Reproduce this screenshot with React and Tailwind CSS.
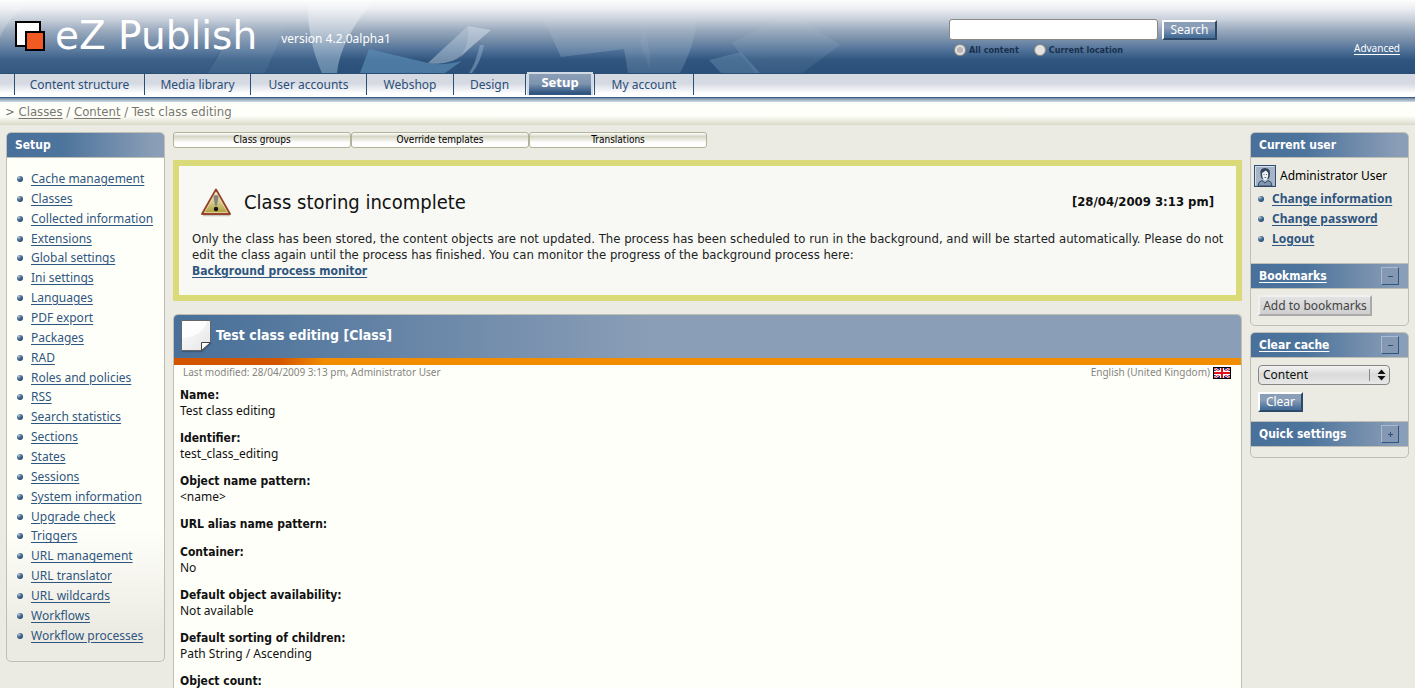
const TABS = [
  ["Content structure", "w-[130px]"],
  ["Media library", "w-[106px]"],
  ["User accounts", "w-[116px]"],
  ["Webshop", "w-[87px]"],
  ["Design", "w-[72px]"],
  ["Setup", "w-[69px]"],
  ["My account", "w-[100px]"],
];

const SETUP_LINKS = [
  "Cache management", "Classes", "Collected information", "Extensions", "Global settings",
  "Ini settings", "Languages", "PDF export", "Packages", "RAD", "Roles and policies", "RSS",
  "Search statistics", "Sections", "States", "Sessions", "System information", "Upgrade check",
  "Triggers", "URL management", "URL translator", "URL wildcards", "Workflows", "Workflow processes",
];

const FIELDS = [
  ["Name:", "Test class editing"],
  ["Identifier:", "test_class_editing"],
  ["Object name pattern:", "<name>"],
  ["URL alias name pattern:", ""],
  ["Container:", "No"],
  ["Default object availability:", "Not available"],
  ["Default sorting of children:", "Path String / Ascending"],
  ["Object count:", ""],
];

const TITLE_BAR = "bg-[linear-gradient(90deg,#49709a_0%,#4d749c_35%,#8b9eb7_95%,#8b9eb7_100%)]";

function Bullet() {
  return (
    <svg className="shrink-0" width="6" height="6" viewBox="0 0 6 6" aria-hidden="true">
      <defs>
        <radialGradient id="ball" cx="0.3" cy="0.25" r="0.8">
          <stop offset="0" stopColor="#b9cbdc" />
          <stop offset="0.45" stopColor="#52759b" />
          <stop offset="1" stopColor="#24466c" />
        </radialGradient>
      </defs>
      <circle cx="3" cy="3" r="3" fill="url(#ball)" />
    </svg>
  );
}

function HeaderArt() {
  return (
    <svg className="absolute left-0 top-0 h-[73px] w-[900px]" viewBox="0 0 900 73" preserveAspectRatio="none" aria-hidden="true">
      <defs>
        <linearGradient id="fade" x1="0" y1="0" x2="0" y2="73" gradientUnits="userSpaceOnUse">
          <stop offset="0" stopColor="#fff" stopOpacity="0.2" />
          <stop offset="0.4" stopColor="#f4f8fb" stopOpacity="0.42" />
          <stop offset="1" stopColor="#8fb2ce" stopOpacity="0.55" />
        </linearGradient>
        <linearGradient id="soft" x1="0" y1="0" x2="0" y2="73" gradientUnits="userSpaceOnUse">
          <stop offset="0" stopColor="#fff" stopOpacity="0" />
          <stop offset="0.25" stopColor="#dde5ee" stopOpacity="0.05" />
          <stop offset="0.7" stopColor="#b9cada" stopOpacity="0.26" />
          <stop offset="1" stopColor="#7fa0c0" stopOpacity="0.28" />
        </linearGradient>
      </defs>
      <path d="M0 0H33Q8 16 0 38Z" fill="url(#fade)" opacity="0.6" />
      <path d="M33 0Q8 16 0 38V73H208L245 0Z" fill="url(#soft)" opacity="0.4" />
      <path d="M250 0H297L265 73H208Z" fill="url(#soft)" opacity="0.8" />
      <path d="M297 0H310Q307 42 323 73H265Z" fill="url(#soft)" opacity="0.4" />
      <path d="M308 0H374Q340 40 337 73H322Q307 40 308 0Z" fill="url(#fade)" />
      <path d="M369 49L428 63Q443 66 462 61L445 73H360Z" fill="#5f92b9" opacity="0.62" />
      <path d="M428 63L468 26L491 30L462 55Q450 66 428 63Z" fill="#c5d5e2" opacity="0.45" />
      <path d="M468 26Q470 45 458 60L473 45L491 30Z" fill="#e5edf3" opacity="0.2" />
      <path d="M480 45Q475 65 469 73H472Q481 62 484 45Z" fill="#a8c3da" opacity="0.4" />
      <path d="M537 5L561 57L624 49L628 73H680Q700 35 696 5Z" fill="url(#soft)" />
      <path d="M644 28Q652 52 650 70L640 43Z" fill="#c9d6e2" opacity="0.08" />
      <path d="M790 12L840 45L802 73H755L732 43Z" fill="url(#soft)" opacity="0.5" />
      <path d="M709 60L741 52L760 73H721Z" fill="#7195b7" opacity="0.4" />
    </svg>
  );
}

function LogoMark() {
  return (
    <svg width="30" height="30" viewBox="0 0 30 30" aria-hidden="true">
      <rect x="1" y="1" width="24" height="24" fill="#fff" stroke="#000" strokeWidth="2" />
      <rect x="11" y="11" width="18" height="18" fill="#f15a22" stroke="#000" strokeWidth="2" />
    </svg>
  );
}

function Header() {
  return (
    <header className="relative flex h-[73px] items-start bg-[linear-gradient(180deg,#fdfdfd_0%,#eceef2_12%,#ccd3dd_25%,#9aaabe_41%,#7990aa_54%,#52739a_68%,#30567f_82%,#2a4f79_100%)]">
      <HeaderArt />
      <div className="relative flex flex-1 items-center pl-[15px] pt-[21px]">
        <LogoMark />
        <span className="ml-[10px] whitespace-nowrap font-['DejaVu_Sans'] text-[39px] leading-[30px] text-white">eZ Publish</span>
        <span className="ml-6 pt-1.5 text-[12px] leading-4 text-white">version 4.2.0alpha1</span>
      </div>
      <form className="relative w-[405px] pt-[19px]" onSubmit={(e) => e.preventDefault()}>
        <div className="flex items-center gap-1">
          <input type="text" aria-label="Search text" className="h-[21px] w-[209px] rounded-[3px] border border-[#8b8884] bg-white px-1" />
          <button type="submit" className="h-5 w-[55px] border-2 border-b-[#2c4a68] border-l-white border-r-[#2c4a68] border-t-white bg-[linear-gradient(180deg,#8b9eb7_0%,#8b9eb7_35%,#49709a_90%)] text-[12px] leading-4 text-white">Search</button>
        </div>
        <div className="flex items-center gap-[15px] pl-[5px] pt-1 font-['DejaVu_Sans_Condensed'] text-[9px] font-bold leading-3 text-[#17304d]">
          <label className="flex items-center gap-[3px]">
            <input type="radio" name="scope" defaultChecked className="size-3 appearance-none rounded-full border border-[#8d8782] bg-[#e4e2e0] checked:bg-[radial-gradient(circle,#b9b7b5_40%,#e4e2e0_50%)]" />
            All content
          </label>
          <label className="flex items-center gap-[3px]">
            <input type="radio" name="scope" className="size-3 appearance-none rounded-full border border-[#8d8782] bg-[#e4e2e0]" />
            Current location
          </label>
        </div>
      </form>
      <a href="#advanced" className="relative mt-[41px] w-[61px] text-[10px] leading-[14px] text-white underline underline-offset-2">Advanced</a>
    </header>
  );
}

function Tabs() {
  return (
    <nav className="flex h-[25px] border-b border-t border-b-[#3a5d84] border-t-[#2a5078] bg-[linear-gradient(180deg,#d5d9e2_0%,#d5d9e2_40%,#fff_85%)] pl-[14px] text-[12px] leading-[21px] text-[#2a4f79]">
      {TABS.map(([name, width]) =>
        name === "Setup" ? (
          <div key={name} className={`${width} h-[21px] border-l border-[#2a5078]`}>
            <a href="#setup" className="relative -top-0.5 mx-px block h-[23px] border-x-2 border-t-2 border-[#d0d9e4] bg-[linear-gradient(180deg,#8b9eb7_0%,#7f95b0_45%,#2f5680_90%)] text-center text-[13px] font-bold leading-[17px] text-white">{name}</a>
          </div>
        ) : (
          <a key={name} href="#tab" className={`${width} h-[21px] border-l border-[#2a5078] text-center last:border-r`}>{name}</a>
        )
      )}
    </nav>
  );
}

function PanelTitle({ children, toggle, link, className = "h-[25px]" }) {
  return (
    <h2 className={`${TITLE_BAR} ${className} flex items-center justify-between border-b border-[#bfbfb5] pl-2 pr-[9px] font-['DejaVu_Sans_Condensed'] text-[12px] font-bold leading-4 text-white`}>
      {link ? <a href="#panel" className="underline underline-offset-2">{children}</a> : <span>{children}</span>}
      {toggle && (
        <button type="button" className="flex size-[18px] items-center justify-center border border-b-[#2f5680] border-l-[#a9bbd0] border-r-[#2f5680] border-t-[#a9bbd0] bg-[#8498b3]" aria-label={toggle === "+" ? "Expand" : "Collapse"}>
          <svg width="5" height="5" viewBox="0 0 5 5" aria-hidden="true">
            <path d={toggle === "+" ? "M0 2.5H5M2.5 0V5" : "M0 2.5H5"} stroke="#2a4f79" strokeWidth="1" />
          </svg>
        </button>
      )}
    </h2>
  );
}

function Warning() {
  return (
    <svg width="32" height="30" viewBox="0 0 32 30" aria-hidden="true">
      <defs>
        <linearGradient id="warn" x1="0" y1="0" x2="0" y2="1">
          <stop offset="0" stopColor="#f3efd0" />
          <stop offset="0.55" stopColor="#d3c887" />
          <stop offset="1" stopColor="#a99a35" />
        </linearGradient>
      </defs>
      <path d="M3 28.3H30" stroke="#000" strokeOpacity="0.2" strokeWidth="2" />
      <path d="M16 2.500L30 27H2Z" fill="url(#warn)" stroke="#97452c" strokeWidth="2" strokeLinejoin="round" />
      <path d="M16 5L27.500 25.500H4.500Z" fill="none" stroke="#f4eecb" strokeOpacity="0.6" strokeWidth="1" />
      <path d="M13.500 10Q13.500 8 16 8T18.500 10L17 18.500H15Z" fill="#85857c" />
      <circle cx="16" cy="22" r="2.200" fill="#111" />
    </svg>
  );
}

function Page() {
  return (
    <svg width="32" height="34" viewBox="0 0 32 34" aria-hidden="true">
      <defs>
        <linearGradient id="sheet" x1="0" y1="0" x2="1" y2="1">
          <stop offset="0" stopColor="#fff" />
          <stop offset="1" stopColor="#e4e4e4" />
        </linearGradient>
      </defs>
      <path d="M2 32.500H22L31 24" fill="none" stroke="#1f3654" strokeOpacity="0.4" strokeWidth="1.500" />
      <path d="M1.500 1.500H30.500V23.500L22 31.500H1.500Z" fill="url(#sheet)" stroke="#666" />
      <path d="M2 2H27Q24 17 2 19Z" fill="#fff" opacity="0.8" />
      <path d="M21.500 31.500V23.500H30.500Z" fill="#fff" stroke="#444" />
    </svg>
  );
}

function Flag() {
  return (
    <svg width="18" height="12" viewBox="0 0 18 12" role="img" aria-label="United Kingdom">
      <rect width="18" height="12" fill="#1a2a80" />
      <path d="M1 1L17 11M17 1L1 11" stroke="#fff" strokeWidth="2.200" />
      <path d="M1 1L17 11M17 1L1 11" stroke="#e0101c" strokeWidth="1" />
      <path d="M9 0V12M0 6H18" stroke="#fff" strokeWidth="4" />
      <path d="M9 0V12M0 6H18" stroke="#e0101c" strokeWidth="2" />
      <rect x="0.500" y="0.500" width="17" height="11" fill="none" stroke="#000" />
    </svg>
  );
}

function Portrait() {
  return (
    <svg width="22" height="22" viewBox="0 0 22 22" aria-hidden="true">
      <rect x="0.500" y="0.500" width="21" height="21" fill="#a5b4c7" stroke="#2f4d70" />
      <path d="M1.500 20.500V1.500H20.500" fill="none" stroke="#d4dde8" />
      <path d="M4 21Q4 16.500 8 15.500L11 18L14 15.500Q18 16.500 18 21Z" fill="#8397b0" stroke="#2c3f58" strokeWidth="0.900" />
      <path d="M6.500 9Q5.500 3 11 3T16 9Q16 12 14.500 14H8Q6.500 12 6.500 9Z" fill="#32445c" />
      <path d="M8 8Q10 6.500 12 5.500L14.200 8Q14.500 14.500 11.200 15.500Q8 14.500 8 8Z" fill="#eef1f4" />
      <path d="M9.500 9.500H10.500M12 9.500H13M10.500 12.500H12.200" stroke="#32445c" strokeWidth="0.800" />
    </svg>
  );
}

function LeftMenu() {
  return (
    <aside className="w-[159px] shrink-0 self-start overflow-hidden rounded-[5px] border border-[#bfbfb5] bg-[linear-gradient(180deg,#fffffa_0%,#fffffa_75%,#ecebe3_94%)]">
      <PanelTitle>Setup</PanelTitle>
      <ul className="flex h-[503px] flex-col justify-between pb-[17px] pl-[10px] pt-[13px] text-[12px] leading-4">
        {SETUP_LINKS.map((name) => (
          <li key={name} className="flex items-center gap-2 whitespace-nowrap">
            <Bullet />
            <a href="#item" className="text-[#2f567f] underline underline-offset-2">{name}</a>
          </li>
        ))}
      </ul>
    </aside>
  );
}

function Main() {
  return (
    <main className="flex min-w-0 flex-1 flex-col">
      <div className="flex">
        {["Class groups", "Override templates", "Translations"].map((name) => (
          <button key={name} type="button" className="h-4 w-[178px] rounded-[3px] border border-[#b3b399] bg-[linear-gradient(180deg,#fff_0%,#d7d7c6_25%,#fff_70%)] text-center font-['DejaVu_Sans_Condensed'] text-[10px] leading-[14px] text-black">{name}</button>
        ))}
      </div>
      <section className="mt-3 h-[141px] shrink-0 border-[6px] border-[#dada78] bg-[#f8f9f5] pl-[13px] pr-2 pt-[21px] text-[#111]">
        <div className="flex items-center pl-2 pr-3.5">
          <Warning />
          <h2 className="ml-3 flex-1 font-['DejaVu_Sans_Condensed'] text-[20px] leading-7">Class storing incomplete</h2>
          <span className="font-['DejaVu_Sans_Condensed'] text-[13px] font-bold leading-5">[28/04/2009 3:13 pm]</span>
        </div>
        <p className="mt-3.5 font-['DejaVu_Sans_Condensed'] text-[13px] leading-4 text-[#222]">
          Only the class has been stored, the content objects are not updated. The process has been scheduled to run in the background, and will be started automatically. Please do not edit the class again until the process has finished. You can monitor the progress of the background process here:
        </p>
        <a href="#monitor" className="block w-fit font-['DejaVu_Sans_Condensed'] text-[12px] font-bold leading-4 text-[#2f567f] underline underline-offset-2">Background process monitor</a>
      </section>
      <section className="mt-[13px] shrink-0 overflow-hidden rounded-t-[5px] border border-b-0 border-[#bfbfb5] bg-[#fffffa]">
        <div className="flex h-[43px] items-start gap-1 bg-[linear-gradient(90deg,#49709a_0px,#54789e_100px,#8b9eb7_480px,#8b9eb7_100%)] pl-1.5 pt-1">
          <Page />
          <h1 className="pt-1.5 font-['DejaVu_Sans_Condensed'] text-[14px] font-bold leading-5 text-white">Test class editing [Class]</h1>
        </div>
        <div className="h-[7px] bg-[linear-gradient(90deg,#d45500_0px,#d45500_105px,#f28c00_150px)]" />
        <div className="flex justify-between pl-[9px] pr-[10px] text-[10px] leading-[15px] text-[#85857f]">
          <span>Last modified: 28/04/2009 3:13 pm, Administrator User</span>
          <span className="flex items-center gap-[3px]">English (United Kingdom) <Flag /></span>
        </div>
        <dl className="flex flex-col gap-[13px] pb-4 pl-1.5 pt-2 text-[12px] leading-[15px] text-[#111]">
          {FIELDS.map(([label, value]) => (
            <div key={label}>
              <dt className="font-['DejaVu_Sans_Condensed'] font-bold">{label}</dt>
              {value && <dd>{value}</dd>}
            </div>
          ))}
        </dl>
      </section>
    </main>
  );
}

function RightColumn() {
  return (
    <aside className="flex w-[159px] shrink-0 flex-col gap-[6px] self-start text-[12px] leading-4">
      <div className="overflow-hidden rounded-[5px] border border-[#bfbfb5]">
        <PanelTitle>Current user</PanelTitle>
        <div className="h-[105px] pl-[3px] pt-[7px]">
          <p className="flex items-center gap-1 text-black"><Portrait />Administrator User</p>
          <ul className="pl-1 pt-0.5 text-[12px] font-bold leading-5">
            {["Change information", "Change password", "Logout"].map((name) => (
              <li key={name} className="flex items-center gap-2 whitespace-nowrap">
                <Bullet />
                <a href="#user" className="text-[#2f567f] underline underline-offset-2">{name}</a>
              </li>
            ))}
          </ul>
        </div>
        <PanelTitle link toggle="-" className="h-[26px] border-t">Bookmarks</PanelTitle>
        <div className="px-[7px] pb-[9px] pt-1.5">
          <button type="button" className="block h-[21px] w-[114px] border-2 border-b-[#aaa] border-l-[#f0f0f0] border-r-[#aaa] border-t-[#f0f0f0] bg-[linear-gradient(180deg,#e2e2e2,#cfcfcf)] text-[12px] leading-4 text-[#444]">Add to bookmarks</button>
        </div>
      </div>
      <div className="overflow-hidden rounded-[5px] border border-[#bfbfb5]">
        <PanelTitle link toggle="-">Clear cache</PanelTitle>
        <div className="px-[7px] pb-[9px] pt-[7px]">
          <div className="relative w-[132px]">
            <select aria-label="Cache type" className="block h-5 w-full appearance-none rounded-[4px] border border-[#858585] bg-[linear-gradient(180deg,#f2f2f2,#dadada_50%,#e8e8e8)] pl-1 text-[12px] leading-4 text-[#111]">
              <option>Content</option>
            </select>
            <svg className="pointer-events-none absolute right-1 top-1" width="18" height="12" viewBox="0 0 18 12" aria-hidden="true">
              <path d="M1.500 0V12" stroke="#888" />
              <path d="M9.500 5L13.500 0.500L17.500 5ZM9.500 7L13.500 11.500L17.500 7Z" fill="#111" />
            </svg>
          </div>
          <button type="button" className="mt-[7px] block h-5 w-[45px] border-2 border-b-[#2c4a68] border-l-white border-r-[#2c4a68] border-t-white bg-[linear-gradient(180deg,#8b9eb7_0%,#8b9eb7_35%,#49709a_90%)] text-[12px] leading-4 text-white">Clear</button>
        </div>
        <PanelTitle toggle="+" className="h-[26px] border-t">Quick settings</PanelTitle>
        <div className="h-2.5" />
      </div>
    </aside>
  );
}

export default function App() {
  return (
    <div className="flex h-screen flex-col overflow-hidden bg-[#ecebe3] font-['Noto_Sans',sans-serif]">
      <div className="shrink-0">
        <Header />
        <Tabs />
        <div className="h-1 bg-[linear-gradient(180deg,#6f8aa7,#d5dce2)]" />
        <p className="h-[23px] bg-[linear-gradient(180deg,#fffffa_0%,#fffffa_60%,#dadacb_100%)] pl-[5px] font-['DejaVu_Sans_Condensed'] text-[13px] leading-5 text-[#77776f]">
          &gt; <a href="#classes" className="underline underline-offset-2">Classes</a> / <a href="#content" className="underline underline-offset-2">Content</a> / Test class editing
        </p>
      </div>
      <div className="flex min-h-0 flex-1 gap-2 pl-1.5 pr-1.5 pt-[7px]">
        <LeftMenu />
        <Main />
        <RightColumn />
      </div>
    </div>
  );
}
